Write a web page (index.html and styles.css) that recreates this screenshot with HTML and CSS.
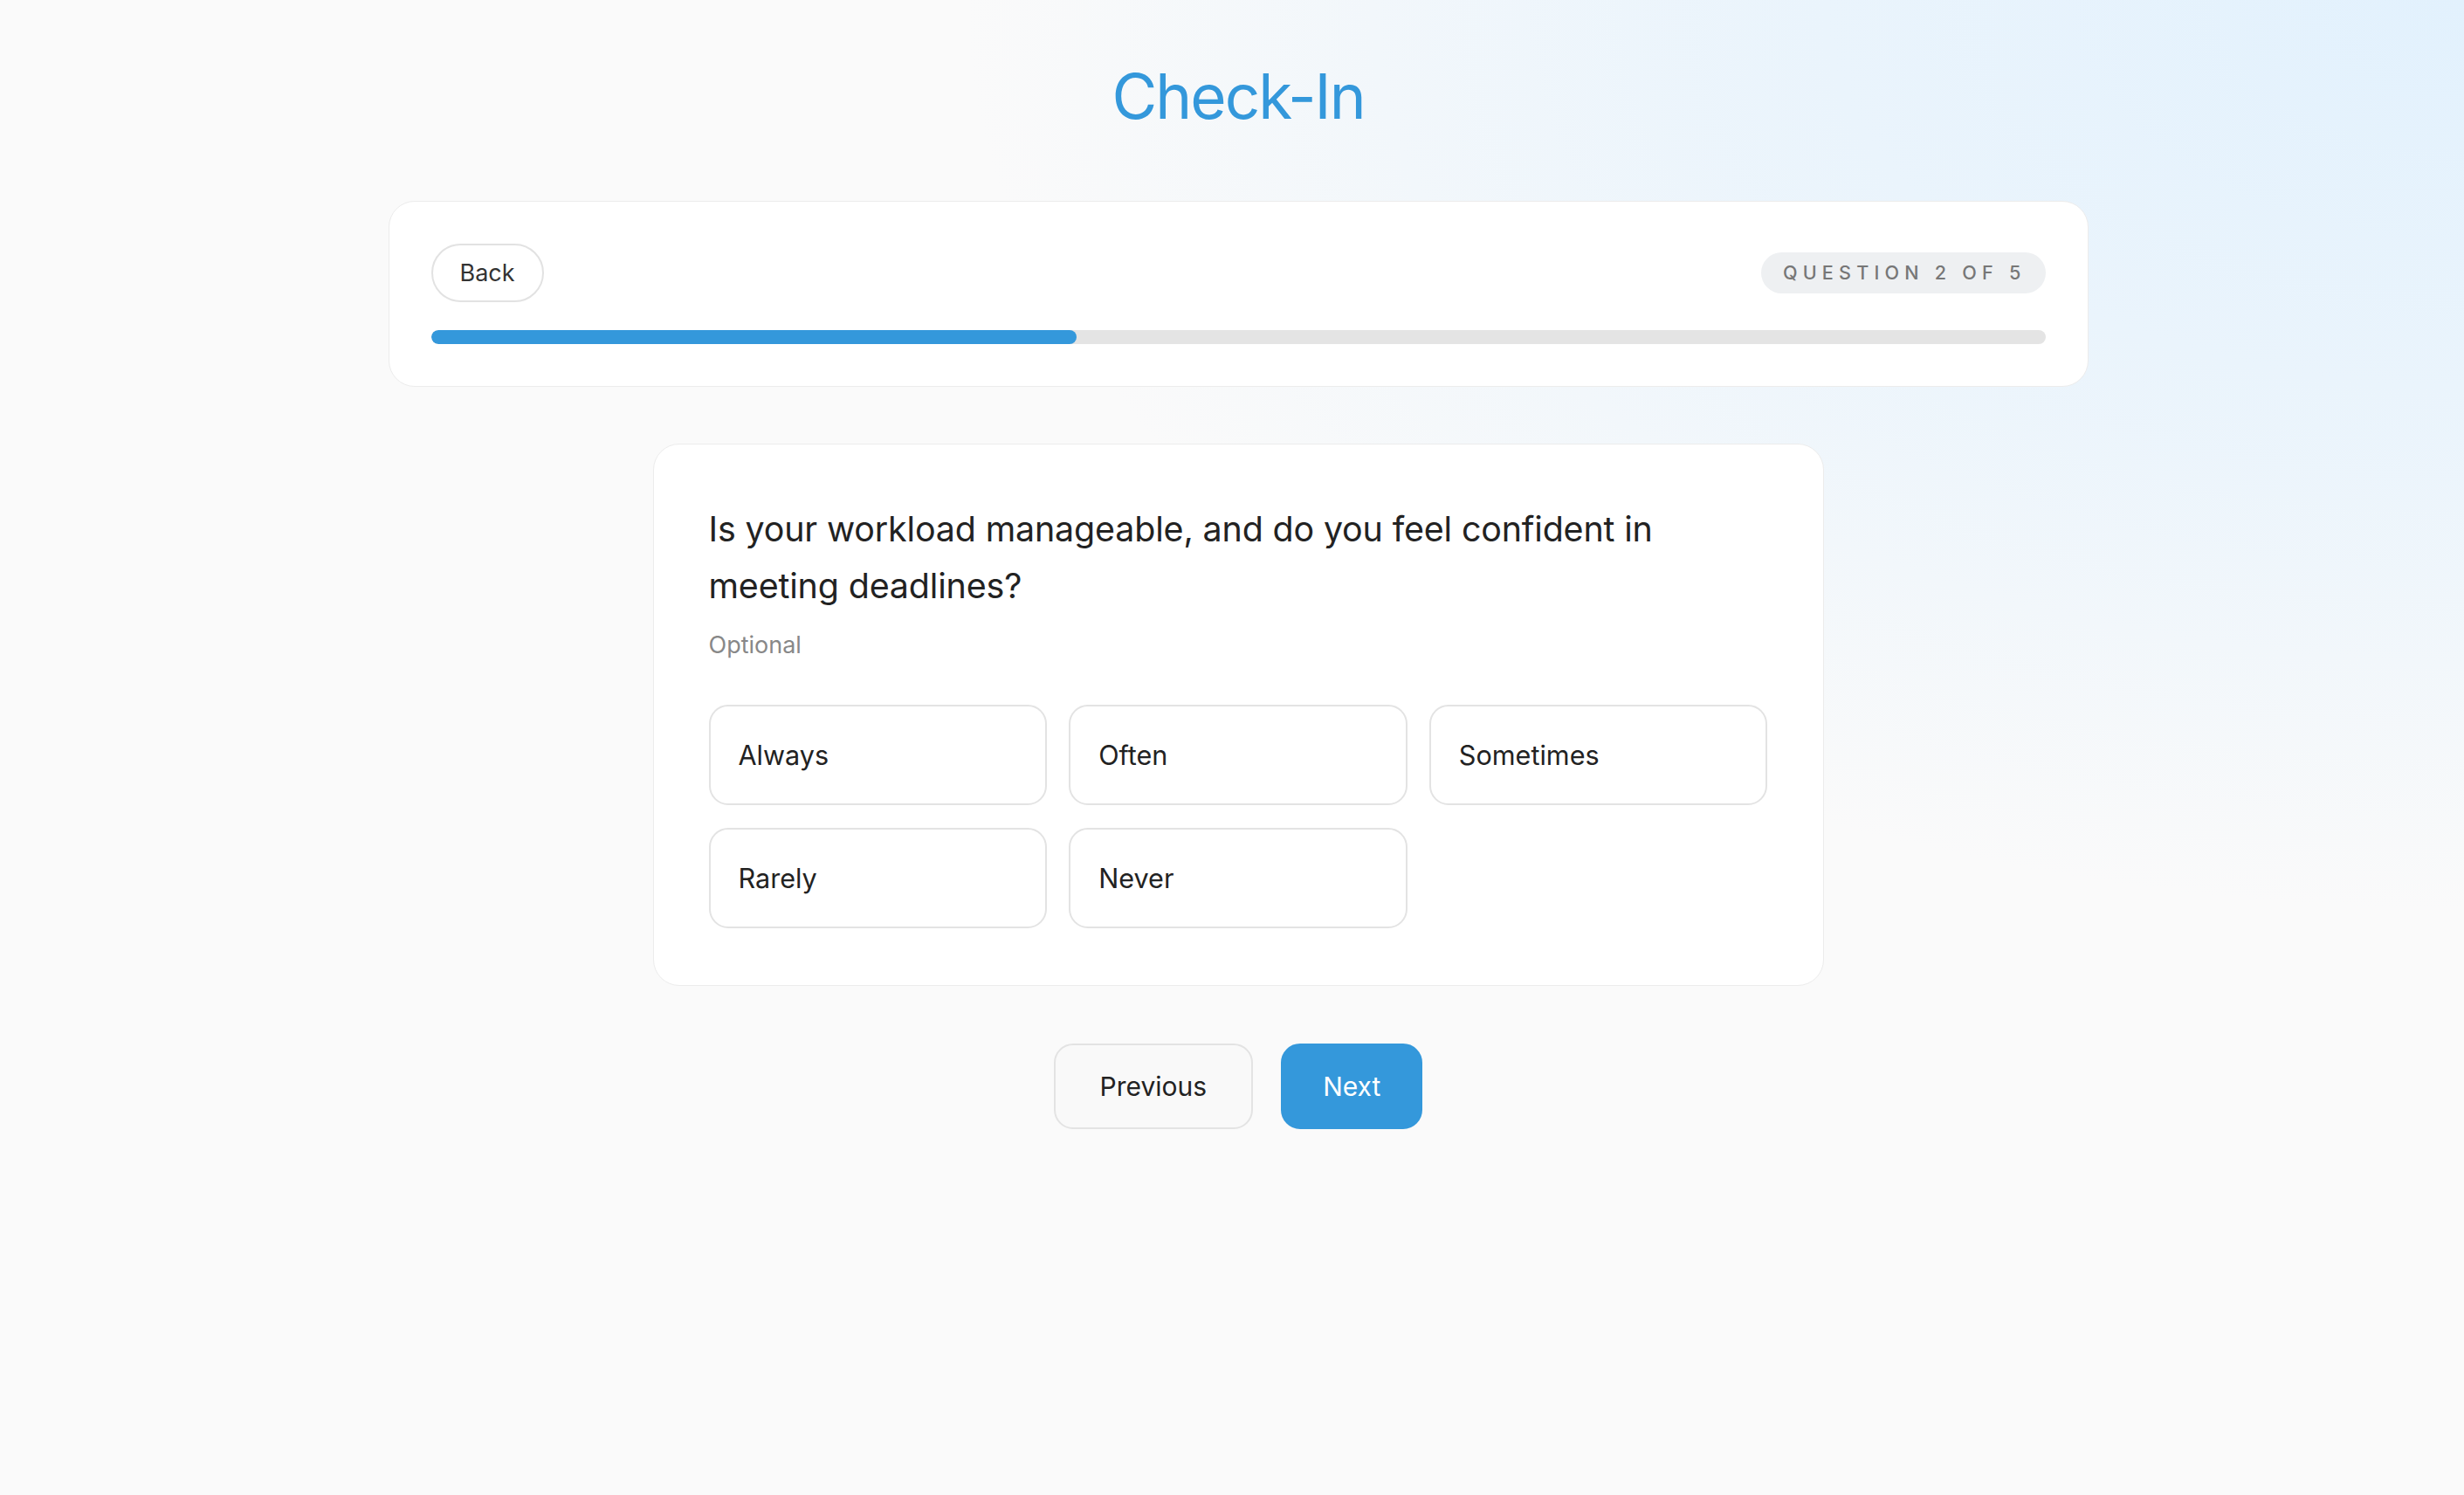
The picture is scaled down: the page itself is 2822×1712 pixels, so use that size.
FILE: index.html
```html
<!DOCTYPE html>
<html lang="en">
<head>
<meta charset="utf-8">
<title>Check-In</title>
<link rel="stylesheet" href="styles.css">
</head>
<body>
<main class="page">
  <h1 class="title">Check-In</h1>

  <section class="progress-card">
    <div class="progress-head">
      <button class="back-btn" type="button">Back</button>
      <span class="badge">Question 2 of 5</span>
    </div>
    <div class="track"><div class="fill" style="width: 40%"></div></div>
  </section>

  <section class="question-card">
    <p class="question">Is your workload manageable, and do you feel confident in meeting deadlines?</p>
    <p class="optional">Optional</p>
    <div class="options">
      <button class="option" type="button">Always</button>
      <button class="option" type="button">Often</button>
      <button class="option" type="button">Sometimes</button>
      <button class="option" type="button">Rarely</button>
      <button class="option" type="button">Never</button>
    </div>
  </section>

  <nav class="nav">
    <button class="nav-btn prev" type="button">Previous</button>
    <button class="nav-btn next" type="button">Next</button>
  </nav>
</main>
</body>
</html>
```

FILE: styles.css
```css
* { box-sizing: border-box; }

html, body { margin: 0; padding: 0; }

body {
  min-height: 100vh;
  font-family: Inter, "Noto Sans", "Liberation Sans", sans-serif;
  color: #222;
  background:
    radial-gradient(ellipse at top right, #e2f1fd 0%, rgba(226, 241, 253, 0.6) 22%, rgba(250, 250, 250, 0) 43%),
    #fafafa;
}

.page {
  display: flex;
  flex-direction: column;
  align-items: center;
  padding: 68px 0 80px 14px;
}

.title {
  margin: 0 0 77px;
  font-size: 71px;
  line-height: 1.2;
  font-weight: 400;
  color: #3498db;
  letter-spacing: -2px;
}

.progress-card {
  width: 1947px;
  padding: 48px;
  background: #fff;
  border: 1px solid #ececec;
  border-radius: 30px;
}

.progress-head {
  display: flex;
  justify-content: space-between;
  align-items: center;
}

.back-btn {
  height: 67px;
  padding: 0 31px;
  font-family: inherit;
  font-size: 27px;
  color: #333;
  background: #fff;
  border: 2px solid #e2e2e2;
  border-radius: 34px;
}

.badge {
  display: inline-block;
  padding: 10px 22px 10px 25px;
  font-size: 21.6px;
  line-height: 27px;
  font-weight: 500;
  letter-spacing: 6.2px;
  text-transform: uppercase;
  color: #777;
  background: #eef0f2;
  border-radius: 24px;
}

.track {
  margin-top: 32px;
  height: 16px;
  background: #e4e4e4;
  border-radius: 8px;
  overflow: hidden;
}

.fill {
  height: 100%;
  background: #3498db;
  border-radius: 8px;
}

.question-card {
  margin-top: 65px;
  width: 1341px;
  padding: 65px 63px 65px;
  background: #fff;
  border: 1px solid #ececec;
  border-radius: 30px;
}

.question {
  margin: 0;
  font-size: 39.4px;
  line-height: 65px;
  letter-spacing: -0.15px;
  color: #222;
}

.optional {
  margin: 15px 0 0;
  font-size: 27px;
  line-height: 40px;
  color: #888;
}

.options {
  margin-top: 48px;
  display: grid;
  grid-template-columns: repeat(3, 1fr);
  gap: 26px 25px;
}

.option {
  height: 115px;
  padding: 0 32px;
  text-align: left;
  font-family: inherit;
  font-size: 30.6px;
  color: #222;
  background: #fff;
  border: 2px solid #e3e3e3;
  border-radius: 22px;
}

.nav {
  margin-top: 66px;
  display: flex;
  gap: 32px;
}

.nav-btn {
  height: 98px;
  padding: 0 48px;
  font-family: inherit;
  font-size: 30px;
  border-radius: 22px;
  border: 2px solid #e3e3e3;
}

.prev {
  padding: 0 51px;
  color: #222;
  background: #f9f9f9;
}

.next {
  padding: 0 46px;
  color: #fff;
  background: #3498db;
  border-color: #3498db;
}
```
